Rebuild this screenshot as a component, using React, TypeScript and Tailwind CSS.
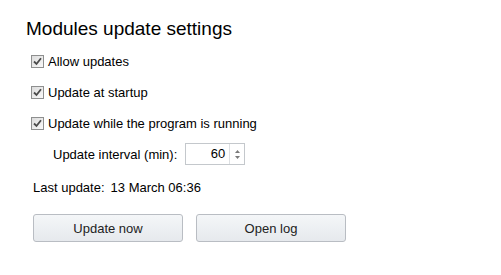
import React from "react";

const Check = ({ label }: { label: string }) => (
  <label className="flex items-center gap-[4px] h-[16px] -ml-[1px]">
    <span className="w-[13px] h-[13px] border border-[#8e8f8f] bg-gradient-to-br from-[#dcdcdc] to-[#f9f9f9] flex items-center justify-center">
      <svg width="9" height="9" viewBox="0 0 9 9">
        <path d="M1 4.5 L3.5 7 L8 1.2" fill="none" stroke="#4b4b4b" strokeWidth="1.8" />
      </svg>
    </span>
    <span>{label}</span>
  </label>
);

const Button = ({ children }: { children: React.ReactNode }) => (
  <button className="w-[150px] h-[28px] border border-[#b9bdc3] rounded-[3px] bg-gradient-to-b from-[#f4f6f8] to-[#e6e9ed] text-[#222]">
    {children}
  </button>
);

export default function App() {
  return (
    <div
      className="w-[501px] h-[275px] bg-white text-black text-[13px] leading-[15px] pl-[32px] pt-[16px]"
      style={{ fontFamily: '"Liberation Sans", Arial, sans-serif' }}
    >
      <h1 className="text-[19px] leading-[26px] -ml-[6px] mb-[11px]">Modules update settings</h1>
      <div className="flex flex-col gap-[15px]">
        <Check label="Allow updates" />
        <Check label="Update at startup" />
        <Check label="Update while the program is running" />
      </div>
      <div className="flex items-center gap-[8px] ml-[21px] mt-[12px]">
        <span>Update interval (min):</span>
        <div className="flex w-[60px] h-[22px] border border-[#c4c8cc] bg-white">
          <span className="flex-1 text-right pr-[4px] leading-[20px]">60</span>
          <span className="w-[15px] border-l border-[#dde0e3] flex flex-col items-center justify-center gap-[3px]">
            <svg width="5" height="3" viewBox="0 0 5 3"><path d="M0 3 L2.5 0 L5 3Z" fill="#7a7a7a" /></svg>
            <svg width="5" height="3" viewBox="0 0 5 3"><path d="M0 0 L2.5 3 L5 0Z" fill="#7a7a7a" /></svg>
          </span>
        </div>
      </div>
      <div className="mt-[15px] ml-[1px] flex gap-[6px]">
        <span>Last update:</span>
        <span>13 March 06:36</span>
      </div>
      <div className="flex gap-[13px] mt-[19px] ml-[1px]">
        <Button>Update now</Button>
        <Button>Open log</Button>
      </div>
    </div>
  );
}
